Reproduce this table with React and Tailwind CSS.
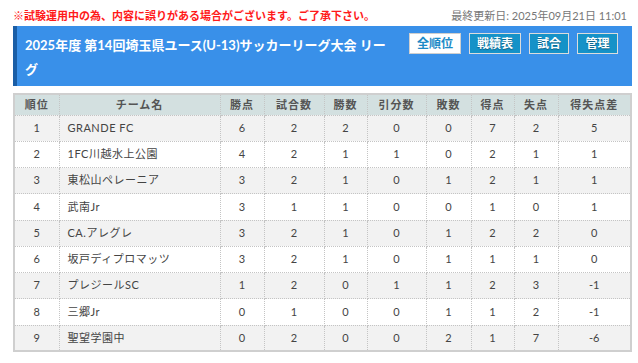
import React from 'react';

// Standings data for the league table
const rows = [
    { rank: 1, team: 'GRANDE FC', pts: 6, played: 2, win: 2, draw: 0, lose: 0, gf: 7, ga: 2, diff: 5 },
    { rank: 2, team: '1FC川越水上公園', pts: 4, played: 2, win: 1, draw: 1, lose: 0, gf: 2, ga: 1, diff: 1 },
    { rank: 3, team: '東松山ペレーニア', pts: 3, played: 2, win: 1, draw: 0, lose: 1, gf: 2, ga: 1, diff: 1 },
    { rank: 4, team: '武南Jr', pts: 3, played: 1, win: 1, draw: 0, lose: 0, gf: 1, ga: 0, diff: 1 },
    { rank: 5, team: 'CA.アレグレ', pts: 3, played: 2, win: 1, draw: 0, lose: 1, gf: 2, ga: 2, diff: 0 },
    { rank: 6, team: '坂戸ディプロマッツ', pts: 3, played: 2, win: 1, draw: 0, lose: 1, gf: 1, ga: 1, diff: 0 },
    { rank: 7, team: 'プレジールSC', pts: 1, played: 2, win: 0, draw: 1, lose: 1, gf: 2, ga: 3, diff: -1 },
    { rank: 8, team: '三郷Jr', pts: 0, played: 1, win: 0, draw: 0, lose: 1, gf: 1, ga: 2, diff: -1 },
    { rank: 9, team: '聖望学園中', pts: 0, played: 2, win: 0, draw: 0, lose: 2, gf: 1, ga: 7, diff: -6 },
];

const headers = ['順位', 'チーム名', '勝点', '試合数', '勝数', '引分数', '敗数', '得点', '失点', '得失点差'];
const widths = ['w-[45px]', 'w-[161px]', 'w-[44px]', 'w-[60px]', 'w-[43px]', 'w-[59px]', 'w-[45px]', 'w-[43px]', 'w-[44px]', 'w-auto'];

const cell = 'border border-dotted border-[#c4c4c4] text-center';

const App = () => {
    return (
        <div className="w-[638px] h-[363px] overflow-hidden bg-white pl-[13px] pr-[6px] pt-[8px] font-['Lato','Noto_Sans_CJK_JP',sans-serif] text-[#444]">
            {/* notice + last update */}
            <div className="flex items-center justify-between h-[15px] text-[11px] leading-[15px]">
                <span className="font-bold text-[#ff1a1a]">※試験運用中の為、内容に誤りがある場合がございます。ご了承下さい。</span>
                <span className="text-[#777] pr-[5px]">最終更新日: 2025年09月21日 11:01</span>
            </div>

            {/* title bar */}
            <div className="mt-[3px] flex items-start bg-[#3990e9] border-l-[4px] border-[#1a5ea6] pl-[8px] pr-[14px] pt-[7px] pb-[5px]">
                <h1 className="w-[370px] text-[13px] font-bold leading-[24px] text-white">
                    2025年度 第14回埼玉県ユース(U-13)サッカーリーグ大会 リーグ
                </h1>
                <div className="ml-auto flex gap-[8px] text-[12px] font-bold">
                    <button className="h-[21px] w-[52px] bg-white border border-[#cfcfcf] text-[#1b8ac6]">全順位</button>
                    <button className="h-[21px] w-[52px] bg-[#1592c8] border border-[#dcdcdc] text-white [text-shadow:0_1px_1px_rgba(0,0,0,0.35)]">戦績表</button>
                    <button className="h-[21px] w-[40px] bg-[#1592c8] border border-[#dcdcdc] text-white [text-shadow:0_1px_1px_rgba(0,0,0,0.35)]">試合</button>
                    <button className="h-[21px] w-[41px] bg-[#1592c8] border border-[#dcdcdc] text-white [text-shadow:0_1px_1px_rgba(0,0,0,0.35)]">管理</button>
                </div>
            </div>

            {/* standings table */}
            <table className="mt-[7px] w-[619px] table-fixed border-collapse border-2 border-solid border-[#cfcfcf] text-[11px]">
                <thead>
                    <tr className="h-[21px] bg-[#d3e0e0] text-[#555]">
                        {headers.map((h, i) => (
                            <th key={h} className={`${widths[i]} ${cell} font-bold tracking-[1px]`}>{h}</th>
                        ))}
                    </tr>
                </thead>
                <tbody>
                    {rows.map(r => (
                        <tr key={r.rank} className={`h-[26.25px] ${r.rank % 2 === 1 ? 'bg-[#f2f2f2]' : 'bg-white'}`}>
                            <td className={cell}>{r.rank}</td>
                            <td className={`${cell} !text-left pl-[8px] tracking-[0.5px]`}>{r.team}</td>
                            <td className={cell}>{r.pts}</td>
                            <td className={cell}>{r.played}</td>
                            <td className={cell}>{r.win}</td>
                            <td className={cell}>{r.draw}</td>
                            <td className={cell}>{r.lose}</td>
                            <td className={cell}>{r.gf}</td>
                            <td className={cell}>{r.ga}</td>
                            <td className={cell}>{r.diff}</td>
                        </tr>
                    ))}
                </tbody>
            </table>
        </div>
    );
};

export default App;
